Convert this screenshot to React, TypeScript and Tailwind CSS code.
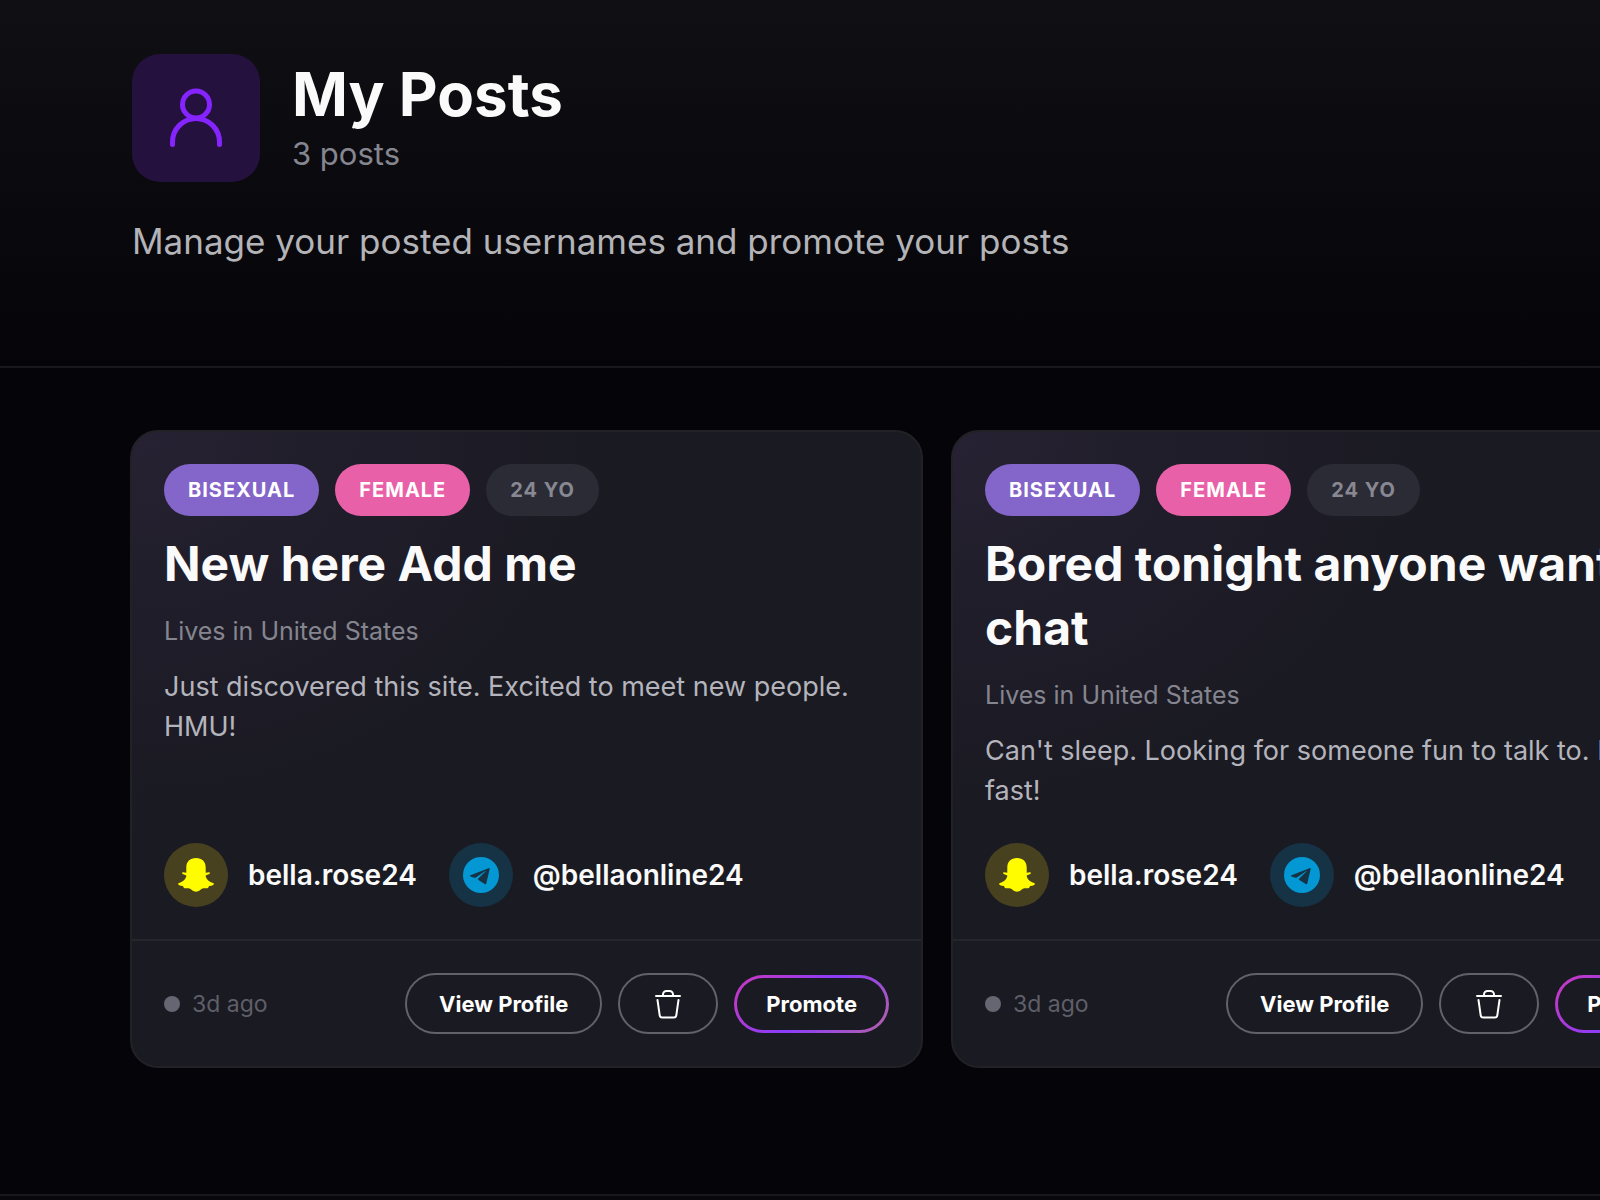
type Post = {
  id: number;
  title: string;
  location: string;
  body: string;
  posted: string;
};

const posts: Post[] = [
  {
    id: 1,
    title: "New here Add me",
    location: "Lives in United States",
    body: "Just discovered this site. Excited to meet new people. HMU!",
    posted: "3d ago",
  },
  {
    id: 2,
    title: "Bored tonight anyone want to chat",
    location: "Lives in United States",
    body: "Can't sleep. Looking for someone fun to talk to. Reply fast!",
    posted: "3d ago",
  },
];

function UserIcon() {
  return (
    <svg
      aria-hidden="true"
      viewBox="0 0 64 64"
      className="h-16 w-16 text-[#8624ff]"
      fill="none"
      stroke="currentColor"
      strokeWidth="5"
      strokeLinecap="round"
    >
      <circle cx="32" cy="18.5" r="13.5" />
      <path d="M8.5 58.5V56a23.5 23.5 0 0 1 47 0v2.5" />
    </svg>
  );
}

function SnapchatIcon() {
  return (
    <svg aria-hidden="true" viewBox="0 0 36 36" className="h-9 w-9 text-[#fffc00]" fill="currentColor">
      <path d="M18 1c-6 0-9.700 3.800-9.700 9.500v5.200L5.200 15.200c-1.300-.1-1.500 1.300-.5 1.800l3.600 1.600c0 3-3.200 6.300-7.400 7.500-1 .3-.9 1.300 0 1.800 1.200.7 3 .9 4 1.200.5.700.5 2 1.600 2.200 1.500.2 3.400-.3 5 .3 2 .8 3.500 3.200 6.500 3.200s4.500-2.400 6.500-3.200c1.600-.6 3.500-.1 5-.3 1.100-.2 1.100-1.500 1.600-2.200 1-.3 2.800-.5 4-1.200.9-.5 1-1.500 0-1.800-4.200-1.200-7.400-4.500-7.400-7.500l3.600-1.600c1-.5.8-1.900-.5-1.800l-3.100.5v-5.200C27.700 4.800 24 1 18 1Z" />
    </svg>
  );
}

function TelegramIcon() {
  return (
    <svg aria-hidden="true" viewBox="0 0 36 36" className="h-9 w-9">
      <circle cx="18" cy="18" r="18" className="fill-[#0398d4]" />
      <path
        className="fill-[#153345]"
        d="M7.500 18.300 25.500 11.200c.8-.3 1.300.2 1.100 1l-3.300 14.300c-.2.800-.9 1-1.600.6l-6.300-4.200c-.5-.4-.5-.9-.1-1.300l7.200-7.100c.3-.4-.1-.6-.5-.3l-9.200 6.300c-.5.3-1 .4-1.600.2l-3.700-1.300c-.8-.3-.8-.8 0-1.100Z"
      />
    </svg>
  );
}

function TrashIcon() {
  return (
    <svg
      aria-hidden="true"
      viewBox="0 0 32 32"
      className="h-8 w-8"
      fill="none"
      stroke="currentColor"
      strokeWidth="2"
      strokeLinecap="round"
      strokeLinejoin="round"
    >
      <path d="M4 8h24" />
      <path d="M11 8V6.5A3.5 3.5 0 0 1 14.5 3h3A3.5 3.5 0 0 1 21 6.5V8" />
      <path d="m5.5 12 2.200 15.400a2.500 2.500 0 0 0 2.500 2.100h11.600a2.500 2.500 0 0 0 2.500-2.100L26.500 12" />
    </svg>
  );
}

function PostCard({ post }: { post: Post }) {
  return (
    <article className="flex flex-col rounded-[28px] border-2 border-[#222226] bg-[#1a1a22] bg-[radial-gradient(ellipse_at_top_left,#272233_0%,#1f1d29_22%,#1a1a22_45%)]">
      <div className="flex flex-1 flex-col p-8">
        <div className="flex gap-4 text-[20px] leading-7 font-bold tracking-wider">
          <span className="rounded-full bg-[#8465c9] px-6 py-3 text-white">BISEXUAL</span>
          <span className="rounded-full bg-[#e861a8] px-6 py-3 text-white">FEMALE</span>
          <span className="rounded-full bg-[#2b2b35] px-6 py-3 text-[#888892]">24 YO</span>
        </div>
        <h2 className="mt-4 text-[48px] leading-16 font-bold text-[#fafafa]">{post.title}</h2>
        <p className="mt-4 text-[25px] leading-[39px] text-[#85858f]">{post.location}</p>
        <p className="mt-4 text-[27px] leading-10 text-[#b4b4bc]">{post.body}</p>
        <div className="mt-auto flex items-center gap-8 pt-8 text-[28px] leading-10 font-semibold text-[#fafafa]">
          <a href="#snapchat" className="flex items-center gap-5">
            <span className="flex h-16 w-16 items-center justify-center rounded-full bg-[#484120]">
              <SnapchatIcon />
            </span>
            bella.rose24
          </a>
          <a href="#telegram" className="flex items-center gap-5">
            <span className="flex h-16 w-16 items-center justify-center rounded-full bg-[#153345]">
              <TelegramIcon />
            </span>
            @bellaonline24
          </a>
        </div>
      </div>
      <footer className="flex items-center justify-between border-t-2 border-[#25252c] p-8">
        <div className="flex items-center gap-3 text-[23px] leading-8 text-[#5f5f69]">
          <span className="h-4 w-4 rounded-full bg-[#666672]" />
          {post.posted}
        </div>
        <div className="flex items-center gap-4 text-[22px] leading-8 font-bold text-white">
          <button type="button" className="h-[61px] rounded-full border-2 border-[#62626a] px-8">
            View Profile
          </button>
          <button
            type="button"
            aria-label="Delete post"
            className="flex h-[61px] items-center rounded-full border-2 border-[#62626a] px-8"
          >
            <TrashIcon />
          </button>
          <button
            type="button"
            className="rounded-full bg-[linear-gradient(135deg,#cc39bd_0%,#8a3cfa_50%,#b562a8_100%)] p-[3px]"
          >
            <span className="block rounded-full bg-[#1a1a22] px-[29px] py-[10px]">Promote</span>
          </button>
        </div>
      </footer>
    </article>
  );
}

export default function App() {
  return (
    <div className="min-h-screen overflow-x-hidden bg-[#050509] font-['Inter',sans-serif]">
      <header className="border-b-2 border-[#19191c] bg-linear-to-b from-[#101014] to-[#050509] px-[132px] pt-[54px] pb-[98px]">
        <div className="flex items-center gap-8">
          <div className="flex h-32 w-32 items-center justify-center rounded-[28px] bg-[#25113e]">
            <UserIcon />
          </div>
          <div>
            <h1 className="text-[60px] leading-[72px] font-bold text-[#fafafa]">My Posts</h1>
            <p className="text-[31px] leading-12 text-[#868690]">3 posts</p>
          </div>
        </div>
        <p className="mt-8 text-[35px] leading-[54px] text-[#b4b4b8]">
          Manage your posted usernames and promote your posts
        </p>
      </header>
      <main className="grid auto-cols-[793px] grid-flow-col gap-7 px-[130px] pt-[62px] pb-[126px]">
        {posts.map((post) => (
          <PostCard key={post.id} post={post} />
        ))}
      </main>
      <div className="h-8 border-t-2 border-[#19191c] bg-[#09090d]" />
    </div>
  );
}
